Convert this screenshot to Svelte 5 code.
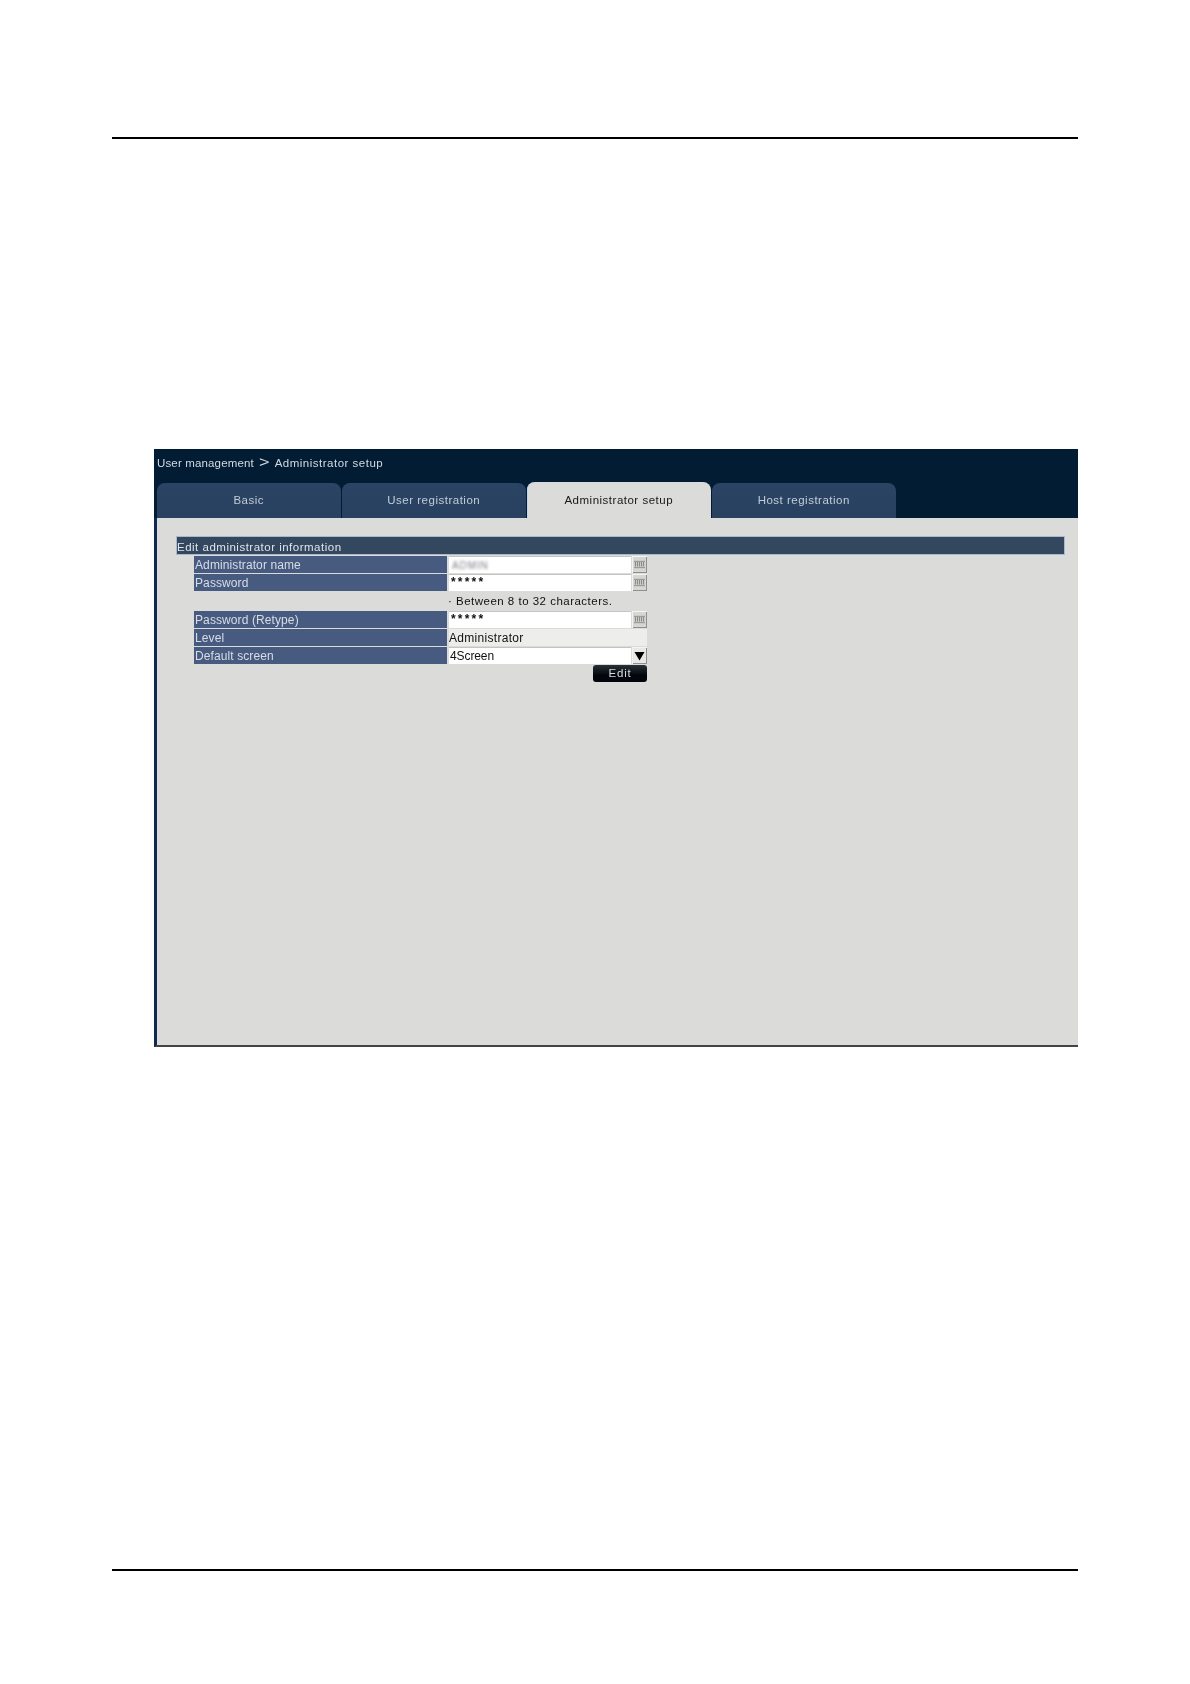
<script>
  const tabs = [
    { label: 'Basic' },
    { label: 'User registration' },
    { label: 'Administrator setup', active: true },
    { label: 'Host registration' }
  ];
</script>

<div class="page">
  <div class="rule"></div>
  <section class="panel">
    <header class="head">
      <div class="crumb"><span class="first">User management</span><span class="gt">&gt;</span><span class="last">Administrator setup</span></div>
      <nav class="tabs">
        {#each tabs as t}
          <div class="tab" class:active={t.active}>{t.label}</div>
        {/each}
      </nav>
    </header>
    <div class="body">
      <div class="section">Edit administrator information</div>
      <div class="form">
        <div class="row">
          <div class="label">Administrator name</div>
          <div class="input"><span class="blur">ADMIN</span></div>
          {@render kb()}
        </div>
        <div class="row">
          <div class="label">Password</div>
          <div class="input stars">*****</div>
          {@render kb()}
        </div>
        <div class="note">· Between 8 to 32 characters.</div>
        <div class="row">
          <div class="label">Password (Retype)</div>
          <div class="input stars">*****</div>
          {@render kb()}
        </div>
        <div class="row">
          <div class="label">Level</div>
          <div class="static">Administrator</div>
        </div>
        <div class="row">
          <div class="label">Default screen</div>
          <div class="input plain">4Screen</div>
          <div class="arrow">
            <svg width="11" height="10" viewBox="0 0 11 10"><path d="M0.5 1h10L5.5 9.5z" fill="#000" /></svg>
          </div>
        </div>
        <div class="actions"><div class="edit">Edit</div></div>
      </div>
    </div>
  </section>
  <div class="rule bottom"></div>
</div>

{#snippet kb()}
  <div class="kb">
    <svg width="11" height="9" viewBox="0 0 11 9">
      <rect width="11" height="9" fill="#cbcbc9" />
      <path d="M0 1.5h11" stroke="#9c9c99" stroke-width="1" />
      <path d="M1.5 2v4.5M3.5 2v4.5M5.5 2v4.5M7.5 2v4.5M9.5 2v4.5" stroke="#8a8a87" stroke-width="1" />
      <path d="M0 7.5h11" stroke="#9c9c99" stroke-width="1" />
    </svg>
  </div>
{/snippet}

<style>
  :global(body) {
    margin: 0;
    background: #fff;
  }
  .page {
    box-sizing: border-box;
    width: 1190px;
    height: 1684px;
    padding: 137px 112px 0;
    font-family: "Liberation Sans", Arial, sans-serif;
  }
  .rule {
    height: 2px;
    background: #000;
  }
  .rule.bottom {
    margin-top: 522px;
  }
  .panel {
    margin: 310px 0 0 42px;
    height: 598px;
    display: flex;
    flex-direction: column;
    filter: blur(0.4px);
    overflow: hidden;
  }
  .head {
    height: 69px;
    flex: none;
    background: #021c33;
    box-sizing: border-box;
    padding-left: 3px;
    display: flex;
    flex-direction: column;
  }
  .crumb {
    height: 33px;
    padding: 6px 0 0 0;
    box-sizing: border-box;
    font-size: 11.5px;
    line-height: 15px;
    color: #d3dae2;
    white-space: nowrap;
  }
  .first {
    letter-spacing: 0.15px;
  }
  .last {
    letter-spacing: 0.5px;
  }
  .gt {
    display: inline-block;
    margin: 0 6px 0 6px;
    font-size: 15px;
    line-height: 14px;
    transform: scaleX(1.2);
  }
  .tabs {
    display: flex;
    gap: 1.5px;
    height: 36px;
    align-items: flex-end;
  }
  .tab {
    width: 183.5px;
    height: 35px;
    border-radius: 8px 8px 0 0;
    background: linear-gradient(#2c4464, #294160);
    color: #c3ccd8;
    font-size: 11.5px;
    letter-spacing: 0.5px;
    text-align: center;
    line-height: 35px;
  }
  .tab.active {
    height: 36px;
    line-height: 37px;
    background: #dbdbd9;
    color: #16181c;
    box-shadow: inset 1px 0 0 #c7d3e4;
  }
  .body {
    flex: 1;
    background: #dbdbd9;
    border-left: 3px solid #0f2a52;
    border-bottom: 2px solid #444;
    padding: 19px 14px 0 20px;
  }
  .section {
    height: 17px;
    background: #33475f;
    box-shadow: 0 0 0 1px #a9b8cc;
    color: #e0e4ea;
    font-size: 11.5px;
    line-height: 20px;
    letter-spacing: 0.5px;
    white-space: nowrap;
  }
  .form {
    width: 453px;
    margin: 2px 0 0 17px;
    display: flex;
    flex-direction: column;
    gap: 1px;
  }
  .row {
    display: flex;
    height: 17px;
  }
  .label {
    width: 253px;
    flex: none;
    box-sizing: border-box;
    padding-left: 1px;
    background: #475a80;
    color: #d8dde5;
    font-size: 12px;
    line-height: 19px;
    letter-spacing: 0.1px;
    white-space: nowrap;
  }
  .input {
    margin-left: 2px;
    width: 182px;
    flex: none;
    background: #fff;
    box-shadow: inset 0 1px 0 #c4c4c2;
    color: #111;
    font-size: 12px;
    line-height: 18px;
    padding-left: 1px;
    box-sizing: border-box;
  }
  .plain {
    letter-spacing: -0.1px;
  }
  .stars {
    padding-left: 2px;
    font-weight: 700;
    letter-spacing: 2.2px;
    line-height: 16px;
  }
  .blur {
    display: inline-block;
    margin-left: 2px;
    color: #7d7d88;
    filter: blur(1.4px);
    font-size: 10px;
    letter-spacing: 0.9px;
  }
  .kb, .arrow {
    width: 15px;
    height: 17px;
    flex: none;
    margin-left: 1px;
    background: #d6d6d4;
    box-shadow: inset 1px 1px 0 #f4f4f2, inset -1px -1px 0 #8f8f8c;
    display: flex;
    align-items: center;
    justify-content: center;
  }
  .arrow {
    background: #e8e8e6;
  }
  .static {
    margin-left: 2px;
    flex: 1;
    background: #ededeb;
    color: #111;
    font-size: 12px;
    line-height: 19px;
    letter-spacing: 0.3px;
  }
  .note {
    height: 16px;
    margin: 1px 0 1px 254px;
    color: #111;
    font-size: 11.5px;
    line-height: 16px;
    letter-spacing: 0.49px;
    white-space: nowrap;
  }
  .actions {
    display: flex;
    justify-content: flex-end;
  }
  .edit {
    width: 54px;
    height: 17px;
    border-radius: 3px;
    background: linear-gradient(#2b3038, #02060c 60%);
    color: #d8dade;
    font-size: 11.5px;
    letter-spacing: 0.8px;
    line-height: 17px;
    text-align: center;
  }
</style>
